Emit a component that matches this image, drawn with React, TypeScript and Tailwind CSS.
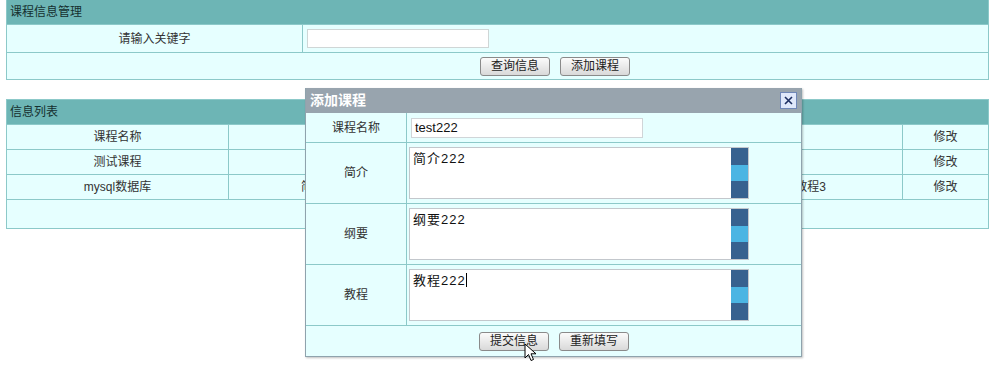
import React from "react";

const cell = "flex items-center justify-center border-r border-[#8cc9c9] last:border-r-0";
const btn =
    "h-[19px] px-[10px] rounded-[3px] border border-[#8a8a8a] bg-gradient-to-b from-[#fbfbfb] to-[#d9d9d9] text-[12px] text-[#222] leading-none";

function ScrollBar() {
    return (
        <div className="flex flex-col w-[17px] h-full">
            <div className="flex-1 bg-[#37618f]" />
            <div className="flex-1 bg-[#4bb5e3]" />
            <div className="flex-1 bg-[#37618f]" />
        </div>
    );
}

function TextBox({ value, caret }: { value: string; caret?: boolean }) {
    return (
        <div className="flex h-[52px] w-[340px] border border-[#c3c7cc] bg-white">
            <div className="flex-1 px-[3px] pt-[1px] text-[13px] text-[#111] tracking-[1px]">
                {value}
                {caret && <span className="inline-block w-px h-[14px] bg-black align-[-2px]" />}
            </div>
            <ScrollBar />
        </div>
    );
}

export default function App() {
    const rows = [
        ["课程名称", "", "", "", "修改"],
        ["测试课程", "", "", "", "修改"],
        ["mysql数据库", "简介mysql", "", "mysql教程3", "修改"],
    ];

    return (
        <div
            className="relative w-[991px] h-[372px] bg-white text-[12px] text-[#333] overflow-hidden"
            style={{ fontFamily: '"Liberation Sans", "Noto Sans CJK SC", sans-serif' }}
        >
            {/* 课程信息管理 */}
            <div className="ml-[6px] mr-[2px] border border-[#8cc9c9] border-t-0">
                <div className="h-[24px] bg-[#6db5b5] px-[3px] flex items-center text-[12px] text-[#15302f]">
                    课程信息管理
                </div>
                <div className="flex h-[28px] bg-[#e6ffff] border-t border-[#8cc9c9]">
                    <div className={clsxCell("w-[296px]")}>请输入关键字</div>
                    <div className="flex-1 flex items-center pl-[4px]">
                        <div className="w-[182px] h-[19px] bg-white border border-[#cfd6d6]" />
                    </div>
                </div>
                <div className="flex h-[27px] bg-[#e6ffff] border-t border-[#8cc9c9] items-center pl-[473px] gap-[10px]">
                    <button className={btn + " border-[#4a90c8] from-[#f3f9ff] to-[#cfe3f5]"}>查询信息</button>
                    <button className={btn}>添加课程</button>
                </div>
            </div>

            {/* 信息列表 */}
            <div className="mt-[19px] ml-[6px] mr-[2px] border border-[#8cc9c9]">
                <div className="h-[24px] bg-[#6db5b5] px-[3px] flex items-center text-[#15302f]">信息列表</div>
                {rows.map((r, i) => (
                    <div key={i} className="flex h-[25px] bg-[#e6ffff] border-t border-[#8cc9c9]">
                        <div className={clsxCell("w-[222px]")}>{r[0]}</div>
                        <div className={clsxCell("w-[222px] justify-start pl-[72px]")}>{r[1]}</div>
                        <div className={clsxCell("w-[225px]")}>{r[2]}</div>
                        <div className={clsxCell("w-[227px] justify-end pr-[76px]")}>{r[3]}</div>
                        <div className="flex-1 flex items-center justify-center">{r[4]}</div>
                    </div>
                ))}
                <div className="h-[29px] bg-[#e6ffff] border-t border-[#8cc9c9]" />
            </div>

            {/* 添加课程 dialog */}
            <div className="absolute left-[305px] top-[88px] w-[497px] border border-[#8fa3ad] border-t-0 shadow-[1px_1px_2px_rgba(0,0,0,0.25)]">
                <div className="h-[25px] bg-[#98a4ae] flex items-center justify-between pl-[4px] pr-[4px]">
                    <span className="text-[14px] font-bold text-white">添加课程</span>
                    <div className="w-[17px] h-[17px] border border-[#6f87b8] bg-[#dfe8fb] flex items-center justify-center">
                        <svg width="9" height="9" viewBox="0 0 9 9">
                            <path d="M1 1L8 8M8 1L1 8" stroke="#1d2f63" strokeWidth="1.6" />
                        </svg>
                    </div>
                </div>
                <div className="bg-[#e6ffff]">
                    <div className="flex h-[29px]">
                        <div className={clsxCell("w-[101px]")}>课程名称</div>
                        <div className="flex-1 flex items-center pl-[4px]">
                            <div className="w-[232px] h-[20px] bg-white border border-[#d0d5d8] px-[3px] flex items-center text-[13px] text-[#111]">
                                test222
                            </div>
                        </div>
                    </div>
                    {[
                        ["简介", "简介222", false],
                        ["纲要", "纲要222", false],
                        ["教程", "教程222", true],
                    ].map(([label, val, caret]) => (
                        <div key={label as string} className="flex h-[61px] border-t border-[#8cc9c9]">
                            <div className={clsxCell("w-[101px]")}>{label}</div>
                            <div className="flex-1 flex items-center pl-[2px]">
                                <TextBox value={val as string} caret={caret as boolean} />
                            </div>
                        </div>
                    ))}
                    <div className="flex h-[31px] border-t border-[#8cc9c9] items-center pl-[173px] gap-[10px]">
                        <button className={btn + " border-[#4a90c8] from-[#f3f9ff] to-[#cfe3f5]"}>提交信息</button>
                        <button className={btn}>重新填写</button>
                    </div>
                </div>
            </div>

            {/* mouse pointer */}
            <svg className="absolute left-[524px] top-[343px]" width="14" height="20" viewBox="0 0 14 20">
                <path d="M1 1L1 15L4.5 11.5L7 17.5L9.5 16.5L7 10.8L12 10.8Z" fill="white" stroke="black" strokeWidth="1" />
            </svg>
        </div>
    );
}

function clsxCell(extra: string) {
    return cell + " " + extra;
}
